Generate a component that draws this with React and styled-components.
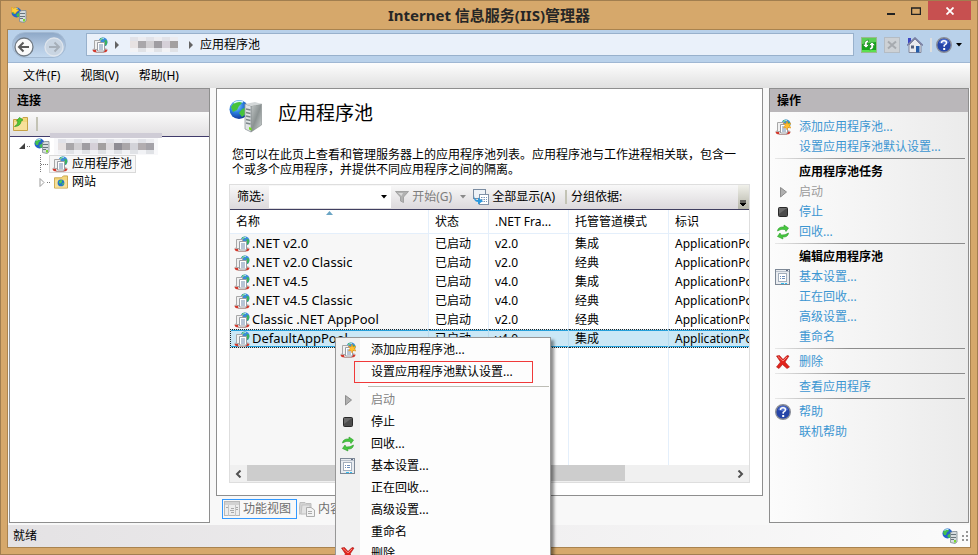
import React, { useState } from 'react';
import styled, { createGlobalStyle, css } from 'styled-components';

const GlobalStyle = createGlobalStyle`
  * { box-sizing: border-box; }
  body {
    margin: 0;
    overflow: hidden;
    font-family: "Noto Sans", "Noto Sans CJK SC", sans-serif;
    font-size: 12px;
    line-height: 20px;
    color: #000;
  }
  button, input {
    font: inherit;
    color: inherit;
    margin: 0;
    padding: 0;
    border: 0;
    background: none;
  }
  svg { display: block; flex: none; }
`;

/* ---------- window frame ---------- */

const Window = styled.div`
  height: 100vh;
  display: flex;
  flex-direction: column;
  padding: 0 6px 6px;
  background: #d6a86b;
  border: 1px solid #a17e4f;
`;

const TitleBar = styled.header`
  height: 28px;
  flex: none;
  display: grid;
  grid-template-columns: 1fr auto 1fr;
  align-items: center;
`;

const AppIcon = styled.span`
  padding-left: 4px;
`;

const Title = styled.h1`
  margin: 0;
  font-size: 15px;
  font-weight: 700;
  color: #262626;
`;

const WindowButtons = styled.div`
  align-self: start;
  display: flex;
  justify-content: flex-end;
`;

const WindowButton = styled.button`
  width: ${(p) => (p.$close ? '43px' : '25px')};
  height: 19px;
  display: flex;
  align-items: center;
  justify-content: center;
  background: ${(p) => (p.$close ? '#c75050' : 'transparent')};
`;

const Client = styled.div`
  flex: 1;
  min-height: 0;
  display: flex;
  flex-direction: column;
  background: #f8f8f8;
  border: 1px solid #a9834f;
`;

/* ---------- navigation and menus ---------- */

const NavBar = styled.nav`
  height: 33px;
  flex: none;
  display: flex;
  align-items: center;
  padding: 0 8px 3px 4px;
  background: #b9d1ea;
  border-bottom: 1px solid #9fb7d3;
`;

const History = styled.div`
  display: flex;
  margin-right: 20px;
  border-radius: 14px;
  border: 1px solid #a3b9d2;
  background: linear-gradient(#8fa9c8, #b4cae3 60%, #c3d8ee);
`;

const HistoryButton = styled.button`
  width: ${(p) => (p.$wide ? '30px' : '22px')};
  height: 24px;
`;

const Address = styled.div`
  flex: 1;
  height: 23px;
  display: flex;
  align-items: center;
  gap: 7px;
  padding-left: 5px;
  background: #eaf1fa;
  border: 1px solid #98b1cc;
`;

const NavTools = styled.div`
  display: flex;
  align-items: center;
  gap: 7px;
  padding-left: 7px;
`;

const HelpTools = styled.div`
  display: flex;
  align-items: center;
  gap: 4px;
`;

const NavDivider = styled.span`
  width: 2px;
  height: 14px;
  background: #dcdfe0;
`;

const MenuBar = styled.div`
  height: 25px;
  flex: none;
  display: flex;
  gap: 20px;
  padding-left: 15px;
  background: linear-gradient(#fdfdfd, #e0e0e0);
`;

/* ---------- panes ---------- */

const Workspace = styled.div`
  flex: 1;
  min-height: 0;
  display: flex;
  gap: 6px;
  padding: 0 1px 2px;
`;

const Pane = styled.section`
  flex: 0 0 ${(p) => p.$width};
  display: flex;
  flex-direction: column;
  border: 1px solid #8e8e8e;
  background: ${(p) => p.$background};
`;

const PaneTitle = styled.h2`
  margin: 0;
  height: 23px;
  flex: none;
  padding-left: 7px;
  font-size: 12px;
  line-height: 23px;
  font-weight: 700;
  background: #bab7ba;
`;

const PaneToolbar = styled.div`
  height: 25px;
  flex: none;
  display: flex;
  align-items: center;
  gap: 8px;
  padding-left: 3px;
  background: linear-gradient(#fafafa, #e2e0e2);
  border-bottom: 1px solid #403b6b;
`;

const Groove = styled.span`
  width: 2px;
  height: 14px;
  background: #c3c3b5;
`;

const Tree = styled.ul`
  list-style: none;
  margin: 0;
  padding: ${(p) => (p.$nested ? '0 0 0 20px' : '0 0 0 8px')};
`;

const TreeRow = styled.div`
  height: 18px;
  display: flex;
  align-items: center;
`;

const TreeLabel = styled.a`
  display: flex;
  align-items: center;
  height: 18px;
  gap: 4px;
  padding: 0 3px 0 2px;
  color: inherit;
  text-decoration: none;
  border: 1px solid ${(p) => (p.$selected ? '#d9d9d9' : 'transparent')};
  background: ${(p) => (p.$selected ? '#f7f7f7' : 'none')};
`;

const Center = styled.main`
  flex: 1;
  min-width: 0;
  display: flex;
  flex-direction: column;
`;

const Page = styled.section`
  flex: 1;
  min-height: 0;
  display: flex;
  flex-direction: column;
  padding: 10px 12px 12px;
  background: #fff;
  border: 1px solid #8e8e8e;
`;

const PageHeading = styled.div`
  display: flex;
  gap: 15px;
`;

const PageTitle = styled.h2`
  margin: 0;
  font-size: 19px;
  line-height: 28px;
  font-weight: 400;
`;

const Description = styled.p`
  margin: 14px 8px 7px 3px;
  line-height: 15px;
`;

/* ---------- list view ---------- */

const ListFrame = styled.div`
  flex: 1;
  min-height: 0;
  display: flex;
  flex-direction: column;
  border: 1px solid #dedede;
`;

const FilterBar = styled.div`
  height: 25px;
  flex: none;
  display: flex;
  align-items: center;
  padding-left: 7px;
  white-space: nowrap;
  background: linear-gradient(#f8f8f8, #dcd9dc);
  border-bottom: 1px solid #403f60;
`;

const Combo = styled.div`
  display: flex;
  align-items: center;
  height: 22px;
  margin: 0 4px 0 5px;
  background: #fff;
`;

const FilterInput = styled.input`
  width: 108px;
  height: 20px;
  outline: none;
`;

const ArrowButton = styled.button`
  width: ${(p) => (p.$wide ? '21px' : '14px')};
  height: 20px;
  display: flex;
  align-items: center;
  justify-content: center;
`;

const ToolButton = styled.button`
  display: flex;
  align-items: center;
  gap: 3px;
  color: ${(p) => (p.disabled ? '#7d7d7d' : 'inherit')};
`;

const FilterGap = styled.span`
  width: 10px;
`;

const GroupLabel = styled.span`
  flex: 1;
  padding-left: 4px;
`;

const OverflowButton = styled.button`
  width: 11px;
  height: 24px;
  display: flex;
  align-items: flex-end;
  justify-content: center;
  padding-bottom: 2px;
  background: linear-gradient(#f0f0ea, #b5b5a8);
`;

const TableViewport = styled.div`
  flex: 1;
  min-height: 0;
  overflow: hidden;
`;

const Table = styled.table`
  width: 760px;
  height: 100%;
  table-layout: fixed;
  border-collapse: separate;
  border-spacing: 0;
`;

const cell = css`
  padding: 0 0 0 6px;
  font-weight: 400;
  text-align: left;
  white-space: nowrap;
  border-right: 1px solid #e4effb;
`;

const HeadCell = styled.th`
  ${cell}
  position: relative;
  height: 24px;
  background: #fff;
  border-bottom: 1px solid #e4effb;
`;

const SortMark = styled.svg`
  position: absolute;
  top: 1px;
  left: 96px;
`;

const Cell = styled.td`
  ${cell}
  height: 19px;
  line-height: 17px;
  font-size: ${(p) => (p.$sorted ? '13px' : '12px')};
  background: ${(p) => (p.$sorted ? '#f7f7f7' : '#fff')};
`;

const Row = styled.tr`
  ${(p) => p.$selected && css`
    ${Cell} {
      background: #cbe8f6;
      border-top: 1px dotted #222;
      border-bottom: 1px dotted #222;
      border-right-color: #b7dcf0;
      box-shadow: inset 0 1px #26a0da, inset 0 -1px #26a0da;
    }
    ${Cell}:first-child { border-left: 1px dotted #222; padding-left: 5px; }
  `}
`;

const NameCell = styled.span`
  display: flex;
  align-items: center;
  gap: 2px;
  margin-left: -2px;
`;

const ScrollBar = styled.div`
  height: 17px;
  flex: none;
  display: flex;
  background: #f0f0f0;
`;

const ScrollTrack = styled.div`
  flex: 1;
  padding-bottom: 1px;
`;

const ScrollThumb = styled.div`
  width: 78%;
  height: 100%;
  background: #cdcdcd;
`;

const ScrollButton = styled.button`
  width: 17px;
  display: flex;
  align-items: center;
  justify-content: center;
`;

const ViewTabs = styled.div`
  height: 27px;
  flex: none;
  display: flex;
  padding: 3px 6px;
`;

const ViewTab = styled.button`
  height: 20px;
  display: flex;
  align-items: center;
  gap: 3px;
  padding: 0 5px 0 1px;
  line-height: 18px;
  color: #6e6e6e;
  border: 1px solid ${(p) => (p.$active ? '#3399ff' : 'transparent')};
`;

/* ---------- actions ---------- */

const ActionList = styled.div`
  padding: 5px 3px 0 5px;
`;

const ActionRow = styled.div`
  height: 20px;
  display: grid;
  grid-template-columns: 24px 1fr;
  align-items: center;
  white-space: nowrap;
`;

const ActionLink = styled.a`
  color: #3c96d2;
  text-decoration: none;
`;

const ActionOff = styled.span`
  color: #9b9b9b;
`;

const ActionHeading = styled.strong`
  font-weight: 700;
`;

const ActionRule = styled.hr`
  height: 1px;
  margin: 1px 0 3px;
  border: 0;
  background: linear-gradient(90deg, #e8e8e8, #8c8c8c 40%);
`;

/* ---------- status bar ---------- */

const StatusBar = styled.footer`
  height: 22px;
  flex: none;
  display: flex;
  align-items: center;
  justify-content: space-between;
  padding: 0 1px 0 5px;
  background: linear-gradient(90deg, #e4e2e4, #fbfbfb);
`;

const StatusIcons = styled.div`
  display: flex;
  align-items: center;
  gap: 2px;
`;

/* ---------- context menu ---------- */

const ContextMenu = styled.div`
  position: absolute;
  left: 335px;
  top: 337px;
  width: 216px;
  padding: 1px 1px 2px 0;
  background: linear-gradient(90deg, #f1f1f1 24px, #fdfdfd 24px);
  border: 1px solid #979797;
  box-shadow: 3px 3px 3px rgba(0, 0, 0, 0.45);
`;

const ContextItem = styled.button`
  width: 100%;
  height: 22px;
  display: grid;
  grid-template-columns: 31px 1fr;
  align-items: center;
  padding-left: 4px;
  text-align: left;
  color: ${(p) => (p.disabled ? '#838383' : '#000')};
  ${(p) => p.$marked && css`
    width: 179px;
    margin-left: 18px;
    padding-left: 16px;
    grid-template-columns: 1fr;
    border: 1px solid #f03a3a;
  `}
`;

const ContextRule = styled.hr`
  height: 1px;
  margin: 3px 0 2px 32px;
  border: 0;
  background: #bdbdb5;
`;

/* ---------- icons ---------- */

const ServerLargeIcon = () => (
  <svg width="34" height="34" viewBox="0 0 34 34">
    <defs>
      <radialGradient id="globe" cx="0.35" cy="0.3" r="0.8">
        <stop offset="0" stopColor="#9fdcff" />
        <stop offset="0.45" stopColor="#2a7fe0" />
        <stop offset="1" stopColor="#0b2a90" />
      </radialGradient>
      <linearGradient id="metal" x2="1" y2="1">
        <stop offset="0" stopColor="#c3c8c8" />
        <stop offset="0.5" stopColor="#8b9292" />
        <stop offset="1" stopColor="#cfd4d4" />
      </linearGradient>
    </defs>
    <circle cx="10" cy="10.500" r="9.500" fill="url(#globe)" />
    <path d="M2 8Q5 2 11 2L13 4L10 7L8 11L4 13ZM13 10L18 8L18 14L13 18L10 14Z" fill="#45c33c" />
    <path d="M5 4Q9 1 14 3" stroke="#d7f5ff" strokeWidth="1.500" fill="none" />
    <path d="M22 7L32.500 5V26L22 33Z" fill="url(#metal)" stroke="#858c8c" strokeWidth="0.600" />
    <path d="M16 5L22 7V33L16 30Z" fill="#dfe3e4" stroke="#929b9d" strokeWidth="0.800" />
    <path d="M16 5L26 3L32.500 5L22 7Z" fill="#d3d7d8" />
    <path d="M17 10L21.500 11M17 13.500L21.500 14.500M17 17L21.500 18M17 20.500L21.500 21.500M17 24L21.500 25" stroke="#7b8588" strokeWidth="1.400" />
    <path d="M20 28L22.500 29V31.500L20 30.500Z" fill="#6fe01c" />
  </svg>
);

const ServerIcon = ({ star = false }) => (
  <svg width="16" height="16" viewBox="0 0 16 16">
    <circle cx="5.500" cy="5.500" r="5" fill="#2563c9" />
    <path d="M1 4Q3 0.500 6 1L7 3L5 4L4 7L2 7ZM7 6L10 5V9L7 10L5 8Z" fill="#43c24c" />
    <path d="M2.500 2.500Q4 1 6.500 1.500" stroke="#b9eaff" fill="none" />
    <path d="M8.500 4.500L11 3.500H15V14L13 15.500L8.500 14.500Z" fill="#d6dcdf" stroke="#7f8b91" strokeWidth="0.800" />
    <path d="M9 6.500H14M9 9.500H14M9 11.500H12" stroke="#68757c" />
    <rect x="12" y="12" width="2" height="2.500" fill="#79d831" />
    {star && <path d="M0 0L3 1.500L5 0L5.500 2.500L8 3L5.500 5L4 7L2.500 5L0 5.500L1 3Z" fill="#ffd03c" stroke="#e39a1a" strokeWidth="0.500" />}
  </svg>
);

const PoolIcon = ({ star = false }) => (
  <svg width="16" height="16" viewBox="0 0 16 16">
    <circle cx="11" cy="5" r="4.600" fill="#3b8bdc" />
    <path d="M8 1.500Q9.500 0.500 11.500 0.800L10.500 2.500L8 3.500ZM12.500 3L15 3.500Q16 6 14 9L12.500 7Z" fill="#3cb45a" />
    <path d="M8.500 2.500Q10 1.200 12 1.500" stroke="#bfeaff" strokeWidth="0.800" fill="none" />
    <path d="M0.500 12.500Q4 10.500 8 11Q12 10.500 15.500 12.500" fill="none" stroke="#b9b9b9" />
    <path d="M0.500 13L4 12L4.500 15.500Q1 15.500 0.500 13ZM15.500 13L12 12L11.500 15.500Q15 15.500 15.500 13Z" fill="#d2392d" />
    <path d="M4 15.500H12" stroke="#b9a09d" />
    <path d="M2.500 3.500H8.500V12.500H2.500Z" fill="#f1f1f1" stroke="#a8a8a8" />
    <path d="M5.500 5.500H12.500V14H5.500Z" fill="#fff" stroke="#9a9da2" />
    <path d="M7 8H11M7 10H11M7 12H11" stroke="#5d7da3" strokeWidth="0.900" />
    {star && (
      <path d="M12 2L13 5L16 4L14.500 6.500L16 9L13 8.500L12 11L11 8.500L8.500 9L10 6.500L8.500 4L11 5Z" fill="#ffbe2c" stroke="#e48c17" strokeWidth="0.500" />
    )}
  </svg>
);

const PlayIcon = () => (
  <svg width="16" height="16" viewBox="0 0 16 16">
    <path d="M5.500 3.500L11.500 8L5.500 13Z" fill="#b0b0b0" stroke="#8d8d8d" />
  </svg>
);

const StopIcon = () => (
  <svg width="16" height="16" viewBox="0 0 16 16">
    <rect x="3.500" y="3.500" width="9" height="9" rx="1" fill="#4c4c4c" stroke="#292929" />
    <path d="M4 4H12L4 10Z" fill="#6b6b6b" />
  </svg>
);

const RecycleIcon = () => (
  <svg width="16" height="16" viewBox="0 0 16 16" fill="#46c83f" stroke="#2b9b29" strokeWidth="0.6">
    <path d="M2.500 7Q3 2.500 9 3L9 1L13.500 4L11 7.500L10 5.500Q6 4.500 2.500 7Z" />
    <path d="M13.500 9Q13 13.500 7.500 13L8 15L2.500 12.500L5 9L6 11Q10 11.500 13.500 9Z" />
  </svg>
);

const SettingsIcon = () => (
  <svg width="16" height="16" viewBox="0 0 16 16">
    <rect x="0.500" y="0.500" width="14" height="15" fill="#e9ecf0" stroke="#7d8896" />
    <path d="M1 2.500H14" stroke="#b9c1cc" />
    <path d="M11 1.500H13" stroke="#5e6a80" />
    <rect x="3.500" y="4.500" width="8" height="8" fill="#fff" stroke="#a3aebc" />
    <path d="M5 7.500H6M7 7.500H10M5 9.500H6M7 9.500H10" stroke="#6f8fba" />
    <path d="M6 14.500H9M10 14.500H12" stroke="#34bdf0" />
  </svg>
);

const DeleteIcon = () => (
  <svg width="16" height="16" viewBox="0 0 16 16">
    <path d="M1.500 2L4.500 1.500L8 5.500L12 1.500L14 2L10 8L14.500 13L12 14.500L7.500 10.500L4 14.500L1.500 13L5.500 8Z" fill="#e2231c" stroke="#a91410" strokeWidth="0.6" />
    <path d="M3 2.500L8 7L12 3" stroke="#f97f76" fill="none" />
  </svg>
);

const HelpIcon = () => (
  <svg width="16" height="16" viewBox="0 0 16 16">
    <circle cx="8" cy="8" r="7.300" fill="#2645a8" stroke="#8b8e97" strokeWidth="1.400" />
    <path d="M3 6Q4 2 8 2T13 6Q8 8 3 6Z" fill="#5473cf" />
    <path d="M5.500 6Q5.500 3.800 8 3.800T10.500 6Q10.500 7.200 8.200 8.400V9.800" fill="none" stroke="#fff" strokeWidth="1.500" />
    <rect x="7.200" y="11" width="2" height="2" fill="#fff" />
  </svg>
);

const FolderIcon = ({ kind }) => (
  <svg width={kind === 'up' ? 15 : 14} height="14" viewBox="0 0 15 14">
    <path d="M0.500 2.500H8L10 0.500H14.500V13.500H0.500Z" fill="#f3d77c" stroke="#c7a247" />
    <path d="M1 5H14V13H1Z" fill="#f7e09a" />
    {kind === 'up' ? (
      <path d="M1.500 9.500Q5 8 5 4L3.500 4L6.500 0.500L10 3L8 4Q8 9 1.500 9.500Z" fill="#52c832" stroke="#2c9622" strokeWidth="0.700" />
    ) : (
      <g>
        <circle cx="7.500" cy="8" r="3.600" fill="#2474cb" />
        <path d="M5 7L7 5L9 5L8 8L6 9ZM9 8L11 8L9 11Z" fill="#55cf4a" />
      </g>
    )}
  </svg>
);

const BackIcon = () => (
  <svg width="22" height="24" viewBox="0 0 22 24">
    <circle cx="11" cy="14" r="9" fill="#fafafa" stroke="#707a84" strokeWidth="1.300" />
    <path d="M6 14H16M10.500 9.500L6 14L10.500 18.500" fill="none" stroke="#5a5a5a" strokeWidth="2" />
  </svg>
);

const ForwardIcon = () => (
  <svg width="22" height="24" viewBox="0 0 22 24">
    <circle cx="11" cy="14" r="9" fill="#c9d5e2" stroke="#dfe5ec" strokeWidth="1.300" />
    <path d="M6 14H16M11.500 9.500L16 14L11.500 18.500" fill="none" stroke="#a6afb9" strokeWidth="2" />
  </svg>
);

const Crumb = () => (
  <svg width="4" height="8" viewBox="0 0 4 8">
    <path d="M0 0L4 4L0 8Z" fill="#636363" />
  </svg>
);

const RefreshIcon = () => (
  <svg width="16" height="16" viewBox="0 0 16 16">
    <rect x="0.500" y="0.500" width="15" height="15" fill="#16a51c" stroke="#9ab98e" />
    <path d="M1 1H15V5L1 7Z" fill="#5bcf55" />
    <path d="M1 13H15V15H1Z" fill="#5be04e" />
    <path d="M7.500 3Q3 3.500 3.500 7.500H1.500L5 11L8.500 7.500H6Q5.500 5.500 7.500 5ZM8.500 13Q13 12.500 12.500 8.500H14.500L11 5L7.500 8.500H10Q10.500 10.500 8.500 11Z" fill="#fff" stroke="#0d7818" strokeWidth="0.600" />
  </svg>
);

const CancelIcon = () => (
  <svg width="16" height="16" viewBox="0 0 16 16">
    <rect x="0.500" y="0.500" width="15" height="15" fill="#cdd1d5" stroke="#b4bcc4" />
    <path d="M4 4.500L12 11.500M12 4.500L4 11.500" stroke="#a6aaaf" strokeWidth="2" />
  </svg>
);

const HomeIcon = () => (
  <svg width="16" height="16" viewBox="0 0 16 16">
    <path d="M2 8L8 2L14 8V15.500H2Z" fill="#e9eaee" stroke="#83879a" />
    <path d="M1 1H4V5L1 7Z" fill="#3c45c2" />
    <path d="M0 8.500L8 0.800L16 8.500" fill="none" stroke="#777da2" strokeWidth="1.400" />
    <rect x="4" y="8.500" width="3" height="3" fill="#57617a" />
    <rect x="9" y="9" width="3.500" height="6.500" fill="#245ca8" />
  </svg>
);

const DropIcon = ({ color = '#000' }) => (
  <svg width="6" height="4" viewBox="0 0 6 4">
    <path d="M0 0H6L3 3.500Z" fill={color} />
  </svg>
);

const FunnelIcon = () => (
  <svg width="14" height="14" viewBox="0 0 14 14">
    <path d="M0.500 1.500H13.500L8.500 7V12.500L5.500 11V7Z" fill="#b1b1b1" stroke="#a2a2a2" />
    <path d="M3 3H8L6.500 6Z" fill="#d8d8d8" />
  </svg>
);

const ShowAllIcon = () => (
  <svg width="16" height="16" viewBox="0 0 16 16">
    <rect x="0.500" y="0.500" width="12" height="9" fill="#eef2f7" stroke="#7a8ba0" />
    <rect x="6.500" y="5.500" width="9" height="10" fill="#fff" stroke="#8292a8" />
    <path d="M8 8.500H14M8 10.500H14M8 12.500H14" stroke="#7894b8" strokeDasharray="1.500 1" />
    <path d="M1 6Q1 11 5 11V8.500L10 12L5 15.500V13Q0 13 1 6Z" fill="#2a98dd" />
  </svg>
);

const FeaturesIcon = () => (
  <svg width="16" height="16" viewBox="0 0 16 16">
    <rect x="0.500" y="0.500" width="15" height="14" fill="#ededed" stroke="#b8b8b8" />
    <path d="M1 1H15V4H1Z" fill="#d2d2d2" />
    <path d="M4.500 4V15M11.500 4V15" stroke="#c4c4c4" />
    <path d="M2 6.500H4M7 7.500H10M6 9.500H10M7 11.500H10M12 6.500H14M12 8.500H14" stroke="#a9a9a9" />
  </svg>
);

const ContentIcon = () => (
  <svg width="16" height="16" viewBox="0 0 16 16">
    <path d="M1 1.500H6L7 2.500H12V12L0 13Z" fill="#d4d4d4" stroke="#bdbdbd" />
    <path d="M3 4H11V13H2Z" fill="#e2e2e2" stroke="#c2c2c2" />
    <path d="M7.500 6.500H12L15.500 9V15.500H7.500Z" fill="#f3f3f3" stroke="#acacac" />
    <path d="M9 10.500H13M9 12.500H13" stroke="#acacac" />
  </svg>
);

const Grip = () => (
  <svg width="9" height="10" viewBox="0 0 9 10" fill="#969696">
    <path d="M6 0H8V2H6ZM6 4H8V6H6ZM6 8H8V10H6ZM2 4H4V6H2ZM2 8H4V10H2Z" />
  </svg>
);

const Expander = ({ open }) => (
  <svg width="8" height="9" viewBox="0 0 8 9">
    {open
      ? <path d="M7 1V7H1Z" fill="#404040" />
      : <path d="M2 0.500L6 4.500L2 8.500Z" fill="#fff" stroke="#9b9b9b" />}
  </svg>
);

const Dots = ({ corner }) => (
  <svg width={corner ? 11 : 5} height="18" viewBox={corner ? '0 0 11 18' : '0 0 5 18'}>
    <path d={corner ? 'M2.500 0V18M3 9.500H11' : 'M1 9.500H5'} stroke="#777" strokeDasharray="1 1" />
  </svg>
);

const TONES = ['#e7e2e2', '#a9a7aa', '#d0ced1', '#9f9da2', '#d5d0d8', '#a3a0a0', '#dcd9dc', '#8f8d94', '#aaa6a9', '#d3d3d9', '#b2adb0', '#a4a2a8', '#d9d4d6'];

const MosaicSvg = styled.svg`
  overflow: visible;
`;

// pixelated cover for the machine name
const Mosaic = ({ cells, cover, strip }) => (
  <MosaicSvg width={cells * 8} height="17">
    {strip && <rect x="-4" y="-5" width={cells * 8 + 8} height="5" fill={strip} />}
    <rect width={cells * 8} height="17" fill={cover} />
    {TONES.slice(0, cells - 1).map((tone, i) => (
      <g key={i}>
        <rect x={i * 8 + 4} y="1" width="8" height="4" fill={i % 2 ? '#ececf0' : '#e1e2e8'} />
        <rect x={i * 8 + 4} y="5" width="8" height="7" fill={tone} />
        <rect x={i * 8 + 4} y="12" width="8" height="4" fill={i % 2 ? '#e0e2e6' : '#f1f2f5'} />
      </g>
    ))}
  </MosaicSvg>
);

/* ---------- data ---------- */

const pools = [
  { name: '.NET v2.0', version: 'v2.0', mode: '集成' },
  { name: '.NET v2.0 Classic', version: 'v2.0', mode: '经典' },
  { name: '.NET v4.5', version: 'v4.0', mode: '集成' },
  { name: '.NET v4.5 Classic', version: 'v4.0', mode: '经典' },
  { name: 'Classic .NET AppPool', version: 'v2.0', mode: '经典' },
  { name: 'DefaultAppPool', version: 'v4.0', mode: '集成' },
];

const actions = [
  { label: '添加应用程序池...', icon: <PoolIcon star /> },
  { label: '设置应用程序池默认设置...' },
  { rule: true },
  { label: '应用程序池任务', heading: true },
  { label: '启动', icon: <PlayIcon />, off: true },
  { label: '停止', icon: <StopIcon /> },
  { label: '回收...', icon: <RecycleIcon /> },
  { rule: true },
  { label: '编辑应用程序池', heading: true },
  { label: '基本设置...', icon: <SettingsIcon /> },
  { label: '正在回收...' },
  { label: '高级设置...' },
  { label: '重命名' },
  { rule: true },
  { label: '删除', icon: <DeleteIcon /> },
  { rule: true },
  { label: '查看应用程序' },
  { rule: true },
  { label: '帮助', icon: <HelpIcon /> },
  { label: '联机帮助' },
];

const contextItems = [
  { label: '添加应用程序池...', icon: <PoolIcon star /> },
  { label: '设置应用程序池默认设置...', marked: true },
  { rule: true },
  { label: '启动', icon: <PlayIcon />, off: true },
  { label: '停止', icon: <StopIcon /> },
  { label: '回收...', icon: <RecycleIcon /> },
  { label: '基本设置...', icon: <SettingsIcon /> },
  { label: '正在回收...' },
  { label: '高级设置...' },
  { label: '重命名' },
  { label: '删除', icon: <DeleteIcon /> },
];

function Action({ item }) {
  if (item.rule) return <ActionRule />;
  return (
    <ActionRow>
      <span>{item.icon}</span>
      {item.heading && <ActionHeading>{item.label}</ActionHeading>}
      {item.off && <ActionOff>{item.label}</ActionOff>}
      {!item.heading && !item.off && <ActionLink href="#">{item.label}</ActionLink>}
    </ActionRow>
  );
}

function PoolTable({ selected, onSelect }) {
  return (
    <Table>
      <colgroup>
        <col width="199" />
        <col width="60" />
        <col width="80" />
        <col width="100" />
        <col />
      </colgroup>
      <thead>
        <tr>
          <HeadCell>
            名称
            <SortMark width="7" height="4" viewBox="0 0 7 4">
              <path d="M0 4L3.500 0L7 4Z" fill="#6aa5c4" />
            </SortMark>
          </HeadCell>
          <HeadCell>状态</HeadCell>
          <HeadCell>.NET Fra...</HeadCell>
          <HeadCell>托管管道模式</HeadCell>
          <HeadCell>标识</HeadCell>
        </tr>
      </thead>
      <tbody>
        {pools.map((pool) => (
          <Row key={pool.name} $selected={pool.name === selected} onClick={() => onSelect(pool.name)}>
            <Cell $sorted>
              <NameCell><PoolIcon />{pool.name}</NameCell>
            </Cell>
            <Cell>已启动</Cell>
            <Cell>{pool.version}</Cell>
            <Cell>{pool.mode}</Cell>
            <Cell>ApplicationPoolIdentity</Cell>
          </Row>
        ))}
        <tr style={{ height: '100%' }}>
          <Cell $sorted />
          <Cell />
          <Cell />
          <Cell />
          <Cell />
        </tr>
      </tbody>
    </Table>
  );
}

function App() {
  const [selected, setSelected] = useState('DefaultAppPool');
  const [filter, setFilter] = useState('');

  return (
    <>
      <GlobalStyle />
      <Window>
        <TitleBar>
          <AppIcon><ServerIcon star /></AppIcon>
          <Title>Internet 信息服务(IIS)管理器</Title>
          <WindowButtons>
            <WindowButton aria-label="最小化">
              <svg width="8" height="10"><rect y="7" width="8" height="2" fill="#222" /></svg>
            </WindowButton>
            <WindowButton aria-label="最大化">
              <svg width="10" height="8"><path d="M0.500 1H9.500V7.500H0.500Z" fill="none" stroke="#222" strokeWidth="1.500" /></svg>
            </WindowButton>
            <WindowButton $close aria-label="关闭">
              <svg width="8" height="8"><path d="M0.500 0.500L7.500 7.500M7.500 0.500L0.500 7.500" stroke="#fff" strokeWidth="1.800" /></svg>
            </WindowButton>
          </WindowButtons>
        </TitleBar>

        <Client>
          <NavBar>
            <History>
              <HistoryButton $wide aria-label="后退"><BackIcon /></HistoryButton>
              <HistoryButton aria-label="前进"><ForwardIcon /></HistoryButton>
            </History>
            <Address>
              <PoolIcon />
              <Crumb />
              <Mosaic cells={7} cover="#eaf1fa" />
              <Crumb />
              <span>应用程序池</span>
            </Address>
            <NavTools>
              <button aria-label="刷新"><RefreshIcon /></button>
              <button aria-label="停止加载"><CancelIcon /></button>
              <button aria-label="主页"><HomeIcon /></button>
              <HelpTools>
                <NavDivider />
                <button aria-label="帮助"><HelpIcon /></button>
                <DropIcon />
              </HelpTools>
            </NavTools>
          </NavBar>
          <MenuBar>
            <button>文件(F)</button>
            <button>视图(V)</button>
            <button>帮助(H)</button>
          </MenuBar>

          <Workspace>
            <Pane $width="201px" $background="#fff">
              <PaneTitle>连接</PaneTitle>
              <PaneToolbar>
                <FolderIcon kind="up" />
                <Groove />
              </PaneToolbar>
              <Tree>
                <li>
                  <TreeRow>
                    <Expander open />
                    <Dots />
                    <TreeLabel href="#" aria-label="服务器">
                      <ServerIcon />
                      <Mosaic cells={13} cover="#f8f8fa" strip="#cfccd6" />
                    </TreeLabel>
                  </TreeRow>
                  <Tree $nested>
                    <li>
                      <TreeRow>
                        <Dots corner />
                        <TreeLabel href="#" $selected><PoolIcon />应用程序池</TreeLabel>
                      </TreeRow>
                    </li>
                    <li>
                      <TreeRow>
                        <Expander />
                        <Dots />
                        <TreeLabel href="#"><FolderIcon />网站</TreeLabel>
                      </TreeRow>
                    </li>
                  </Tree>
                </li>
              </Tree>
            </Pane>

            <Center>
              <Page>
                <PageHeading>
                  <ServerLargeIcon />
                  <PageTitle>应用程序池</PageTitle>
                </PageHeading>
                <Description>
                  您可以在此页上查看和管理服务器上的应用程序池列表。应用程序池与工作进程相关联，包含一个或多个应用程序，并提供不同应用程序之间的隔离。
                </Description>
                <ListFrame>
                  <FilterBar>
                    <label htmlFor="filter">筛选:</label>
                    <Combo>
                      <FilterInput id="filter" value={filter} onChange={(e) => setFilter(e.target.value)} />
                      <ArrowButton aria-label="筛选历史"><DropIcon /></ArrowButton>
                    </Combo>
                    <ToolButton disabled><FunnelIcon />开始(G)</ToolButton>
                    <ArrowButton $wide aria-label="开始选项"><DropIcon color="#8a8a8a" /></ArrowButton>
                    <ToolButton><ShowAllIcon />全部显示(A)</ToolButton>
                    <FilterGap />
                    <Groove />
                    <GroupLabel>分组依据:</GroupLabel>
                    <OverflowButton aria-label="更多">
                      <svg width="7" height="7"><path d="M0 1H6M0 3H6L3 6Z" stroke="#000" strokeWidth="1" fill="#000" /></svg>
                    </OverflowButton>
                  </FilterBar>
                  <TableViewport>
                    <PoolTable selected={selected} onSelect={setSelected} />
                  </TableViewport>
                  <ScrollBar>
                    <ScrollButton aria-label="向左滚动">
                      <svg width="7" height="8"><path d="M5.500 0.500L2 4L5.500 7.500" stroke="#505050" strokeWidth="2" fill="none" /></svg>
                    </ScrollButton>
                    <ScrollTrack><ScrollThumb /></ScrollTrack>
                    <ScrollButton aria-label="向右滚动">
                      <svg width="7" height="8"><path d="M1.500 0.500L5 4L1.500 7.500" stroke="#505050" strokeWidth="2" fill="none" /></svg>
                    </ScrollButton>
                  </ScrollBar>
                </ListFrame>
              </Page>
              <ViewTabs>
                <ViewTab $active><FeaturesIcon />功能视图</ViewTab>
                <ViewTab><ContentIcon />内容视图</ViewTab>
              </ViewTabs>
            </Center>

            <Pane $width="200px" $background="linear-gradient(90deg, #fcfcfc, #ebebeb)">
              <PaneTitle>操作</PaneTitle>
              <ActionList>
                {actions.map((item, i) => <Action key={i} item={item} />)}
              </ActionList>
            </Pane>
          </Workspace>

          <StatusBar>
            <span>就绪</span>
            <StatusIcons>
              <ServerIcon />
              <Grip />
            </StatusIcons>
          </StatusBar>
        </Client>
      </Window>

      <ContextMenu role="menu">
        {contextItems.map((item, i) => (item.rule ? (
          <ContextRule key={i} />
        ) : (
          <ContextItem key={i} role="menuitem" disabled={item.off} $marked={item.marked}>
            {!item.marked && <span>{item.icon}</span>}
            {item.label}
          </ContextItem>
        )))}
      </ContextMenu>
    </>
  );
}

export default App;
